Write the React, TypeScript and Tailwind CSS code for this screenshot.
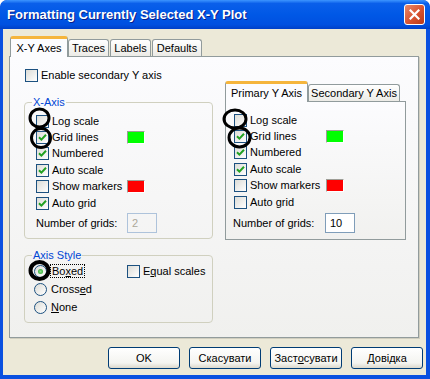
import React from "react";

const Check = ({ checked }: { checked?: boolean }) => (
  <span className="w-[13px] h-[13px] shrink-0 border border-[#1c5180] bg-[linear-gradient(135deg,#dcdcd7,#ffffff)] flex items-center justify-center">
    {checked && (
      <svg width="9" height="9" viewBox="0 0 9 9">
        <path d="M1 4.2 L3.4 6.6 L8 1.8" stroke="#21a121" strokeWidth="2" fill="none" />
      </svg>
    )}
  </span>
);

const Radio = ({ checked }: { checked?: boolean }) => (
  <span className="w-[13px] h-[13px] shrink-0 rounded-full border border-[#1c5180] bg-[linear-gradient(135deg,#dcdcd7,#ffffff)] flex items-center justify-center">
    {checked && <span className="w-[5px] h-[5px] rounded-full bg-[radial-gradient(circle,#8ee28e,#21a121)]" />}
  </span>
);

const Swatch = ({ color }: { color: string }) => (
  <span className="w-[18px] h-[13px] border border-t-[#9d9d96] border-l-[#9d9d96] border-b-white border-r-white">
    <span className="block w-full h-full" style={{ background: color }} />
  </span>
);

type Row = { label: string; checked?: boolean; swatch?: string };

const CheckRows = ({ rows, w }: { rows: Row[]; w: string }) => (
  <div className="flex flex-col">
    {rows.map((r) => (
      <div key={r.label} className="h-[16.4px] flex items-center">
        <div className={"flex items-center gap-[3px] " + w}>
          <Check checked={r.checked} />
          <span>{r.label}</span>
        </div>
        {r.swatch && <Swatch color={r.swatch} />}
      </div>
    ))}
  </div>
);

const rowsX: Row[] = [
  { label: "Log scale" },
  { label: "Grid lines", checked: true, swatch: "#00ff00" },
  { label: "Numbered", checked: true },
  { label: "Auto scale", checked: true },
  { label: "Show markers", swatch: "#ff0000" },
  { label: "Auto grid", checked: true },
];

const rowsY: Row[] = [
  { label: "Log scale" },
  { label: "Grid lines", checked: true, swatch: "#00ff00" },
  { label: "Numbered", checked: true },
  { label: "Auto scale", checked: true },
  { label: "Show markers", swatch: "#ff0000" },
  { label: "Auto grid" },
];

const Tab = ({ label, active, w }: { label: string; active?: boolean; w: string }) =>
  active ? (
    <div
      className={
        "relative z-10 -mb-px h-[21px] rounded-t-[3px] border-x border-[#919b9c] border-t-[3px] border-t-[#f5b53c] bg-[#fcfcfe] flex items-center justify-center " +
        w
      }
    >
      {label}
    </div>
  ) : (
    <div
      className={
        "h-[17px] rounded-t-[3px] border border-b-0 border-[#919b9c] bg-[linear-gradient(#ffffff,#ecebe6)] flex items-center justify-center " +
        w
      }
    >
      {label}
    </div>
  );

const Button = ({ children }: { children: React.ReactNode }) => (
  <div className="w-[72px] h-[22px] rounded-[3px] border border-[#003c74] bg-[linear-gradient(#ffffff,#f4f4f0_75%,#dcd8cc)] flex items-center justify-center">
    <span className="font-normal text-[11px] text-black">{children}</span>
  </div>
);

export default function App() {
  return (
    <div className="relative w-[430px] h-[379px] flex flex-col rounded-t-[7px] bg-[#0a50e0] font-['Liberation_Sans',Arial,sans-serif] text-[11px] leading-[13px] text-black overflow-hidden">
      {/* title bar */}
      <div className="h-[29px] shrink-0 flex items-center justify-between rounded-t-[7px] bg-[linear-gradient(#3d95ff,#0a5fea_12%,#0058e6_50%,#0050e0_85%,#0040c8)]">
        <span className="pl-[7px] font-bold text-[13px] text-white [text-shadow:1px_1px_0_#0a1f8a]">
          Formatting Currently Selected X-Y Plot
        </span>
        <span className="mr-[5px] w-[21px] h-[21px] rounded-[3px] border border-white bg-[linear-gradient(135deg,#e98a6c,#d8522f_55%,#b83a18)] flex items-center justify-center">
          <svg width="11" height="11" viewBox="0 0 11 11">
            <path d="M1.5 1.5 L9.5 9.5 M9.5 1.5 L1.5 9.5" stroke="#fff" strokeWidth="2.2" strokeLinecap="square" />
          </svg>
        </span>
      </div>

      {/* body */}
      <div className="flex-1 ml-[3px] mr-[4px] mb-[4px] bg-[#ece9d8] pt-[7px] pl-[6px]">
        <div className="flex items-end h-[20px] pl-[1px]">
          <Tab label="X-Y Axes" active w="w-[58px]" />
          <Tab label="Traces" w="w-[41px]" />
          <Tab label="Labels" w="w-[41px] ml-[1px]" />
          <Tab label="Defaults" w="w-[50px] ml-[1px]" />
        </div>

        <div className="w-[410px] h-[282px] border border-[#919b9c] bg-[linear-gradient(#fcfcfe,#f0f0ee)] shadow-[1px_1px_0_#d0cebf] flex pl-[14px]">
          {/* left column */}
          <div className="w-[189px] pt-[12px]">
            <div className="flex items-center gap-[3px] ml-[1px] h-[13px]">
              <Check />
              <span>Enable secondary Y axis</span>
            </div>

            <fieldset className="mt-[14px] border border-[#d0d0bf] rounded-[4px]">
              <legend className="ml-[7px] px-[1px] text-[#0046d5] leading-[13px]">X-Axis</legend>
              <div className="pl-[11px] pt-[4px] pb-[5px]">
                <CheckRows rows={rowsX} w="w-[91px]" />
                <div className="mt-[2px] h-[20px] flex items-center">
                  <span className="w-[91px]">Number of grids:</span>
                  <span className="w-[30px] h-[20px] border border-[#aec3db] flex items-center pl-[4px] text-[#aca899]">2</span>
                </div>
              </div>
            </fieldset>

            <fieldset className="mt-[10px] border border-[#d0d0bf] rounded-[4px]">
              <legend className="ml-[7px] px-[1px] text-[#0046d5] leading-[13px]">Axis Style</legend>
              <div className="pl-[9px] pb-[6px]">
                <div className="h-[18px] flex items-center">
                  <div className="w-[93px] flex items-center gap-[3px]">
                    <Radio checked />
                    <span className="border border-dotted border-black px-px leading-[12px]">
                      Bo<u>x</u>ed
                    </span>
                  </div>
                  <div className="flex items-center gap-[3px]">
                    <Check />
                    <span>
                      E<u>q</u>ual scales
                    </span>
                  </div>
                </div>
                <div className="h-[18px] flex items-center gap-[4px]">
                  <Radio />
                  <span>
                    Cross<u>e</u>d
                  </span>
                </div>
                <div className="h-[18px] flex items-center gap-[4px]">
                  <Radio />
                  <span>
                    <u>N</u>one
                  </span>
                </div>
              </div>
            </fieldset>
          </div>

          {/* right column */}
          <div className="ml-[12px] mt-[25px]">
            <div className="flex items-end h-[19px]">
              <Tab label="Primary Y Axis" active w="w-[83px]" />
              <Tab label="Secondary Y Axis" w="w-[92px]" />
            </div>
            <div className="w-[181px] h-[139px] border border-[#919b9c] bg-[linear-gradient(#fcfcfe,#f1f1ef)] pl-[8px] pt-[10px]">
              <CheckRows rows={rowsY} w="w-[92px]" />
              <div className="mt-[3px] h-[20px] flex items-center -ml-px">
                <span className="w-[92px]">Number of grids:</span>
                <span className="w-[30px] h-[20px] border border-[#7f9db9] bg-white flex items-center pl-[4px]">10</span>
              </div>
            </div>
          </div>
        </div>

        <div className="mt-[9px] flex justify-end gap-[9px] pr-[3px]">
          <Button>OK</Button>
          <Button>Скасувати</Button>
          <Button>
            Заст<u>о</u>сувати
          </Button>
          <Button>Довідка</Button>
        </div>
      </div>

      {/* hand-drawn annotation circles */}
      <svg className="absolute inset-0 pointer-events-none" width="430" height="379">
        <g fill="none" stroke="#000" strokeWidth="3">
          <ellipse cx="39.5" cy="118" rx="9.5" ry="9" />
          <ellipse cx="41" cy="138" rx="9.5" ry="9.5" />
          <ellipse cx="235" cy="119" rx="11" ry="9" />
          <ellipse cx="239.5" cy="137.5" rx="10.5" ry="9.5" />
          <ellipse cx="39.5" cy="270.5" rx="9" ry="8.5" strokeWidth="4" />
        </g>
      </svg>
    </div>
  );
}
